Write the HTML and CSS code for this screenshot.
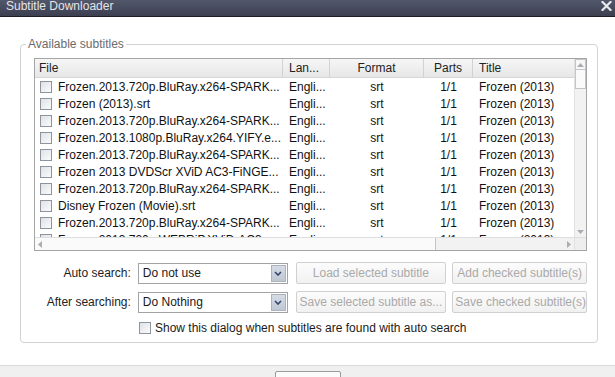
FILE: index.html
```html
<!DOCTYPE html>
<html lang="en">
<head>
  <meta charset="UTF-8">
  <title>Subtitle Downloader</title>
  <link rel="stylesheet" href="styles.css">
</head>
<body>
  <div class="window">
    <!-- Title bar -->
    <div class="titlebar">
      <span class="title">Subtitle Downloader</span>
      <svg class="close" width="11" height="10" viewBox="0 0 11 10">
        <path d="M1.5 1 L9.5 9 M9.5 1 L1.5 9" stroke="#e8e9ee" stroke-width="2.2" stroke-linecap="square"/>
      </svg>
    </div>

    <div class="group">
      <span class="legend">Available subtitles</span>

      <div class="list">
        <div class="viewport">
          <div class="row head">
            <span class="col col-file">File</span>
            <span class="col col-lang">Lan...</span>
            <span class="col col-format">Format</span>
            <span class="col col-parts">Parts</span>
            <span class="col col-title">Title</span>
          </div>
          <div class="row">
            <span class="col col-file"><span class="check"></span>Frozen.2013.720p.BluRay.x264-SPARK...</span>
            <span class="col col-lang">Engli...</span><span class="col col-format">srt</span><span class="col col-parts">1/1</span><span class="col col-title">Frozen (2013)</span>
          </div>
          <div class="row">
            <span class="col col-file"><span class="check"></span>Frozen (2013).srt</span>
            <span class="col col-lang">Engli...</span><span class="col col-format">srt</span><span class="col col-parts">1/1</span><span class="col col-title">Frozen (2013)</span>
          </div>
          <div class="row">
            <span class="col col-file"><span class="check"></span>Frozen.2013.720p.BluRay.x264-SPARK...</span>
            <span class="col col-lang">Engli...</span><span class="col col-format">srt</span><span class="col col-parts">1/1</span><span class="col col-title">Frozen (2013)</span>
          </div>
          <div class="row">
            <span class="col col-file"><span class="check"></span>Frozen.2013.1080p.BluRay.x264.YIFY.e...</span>
            <span class="col col-lang">Engli...</span><span class="col col-format">srt</span><span class="col col-parts">1/1</span><span class="col col-title">Frozen (2013)</span>
          </div>
          <div class="row">
            <span class="col col-file"><span class="check"></span>Frozen.2013.720p.BluRay.x264-SPARK...</span>
            <span class="col col-lang">Engli...</span><span class="col col-format">srt</span><span class="col col-parts">1/1</span><span class="col col-title">Frozen (2013)</span>
          </div>
          <div class="row">
            <span class="col col-file"><span class="check"></span>Frozen 2013 DVDScr XViD AC3-FiNGE...</span>
            <span class="col col-lang">Engli...</span><span class="col col-format">srt</span><span class="col col-parts">1/1</span><span class="col col-title">Frozen (2013)</span>
          </div>
          <div class="row">
            <span class="col col-file"><span class="check"></span>Frozen.2013.720p.BluRay.x264-SPARK...</span>
            <span class="col col-lang">Engli...</span><span class="col col-format">srt</span><span class="col col-parts">1/1</span><span class="col col-title">Frozen (2013)</span>
          </div>
          <div class="row">
            <span class="col col-file"><span class="check"></span>Disney Frozen (Movie).srt</span>
            <span class="col col-lang">Engli...</span><span class="col col-format">srt</span><span class="col col-parts">1/1</span><span class="col col-title">Frozen (2013)</span>
          </div>
          <div class="row">
            <span class="col col-file"><span class="check"></span>Frozen.2013.720p.BluRay.x264-SPARK...</span>
            <span class="col col-lang">Engli...</span><span class="col col-format">srt</span><span class="col col-parts">1/1</span><span class="col col-title">Frozen (2013)</span>
          </div>
          <div class="row">
            <span class="col col-file"><span class="check"></span>Frozen.2013.720p.WEBRiP.XViD-AC3...</span>
            <span class="col col-lang">Engli...</span><span class="col col-format">srt</span><span class="col col-parts">1/1</span><span class="col col-title">Frozen (2013)</span>
          </div>
        </div>

        <div class="vscroll">
          <span class="sb-btn"><svg width="7" height="4" viewBox="0 0 7 4"><path d="M0 4 L3.5 0 L7 4 Z" fill="#a9adb3"/></svg></span>
          <span class="vthumb"></span>
          <span class="sb-fill"></span>
          <span class="sb-btn"><svg width="7" height="4" viewBox="0 0 7 4"><path d="M0 0 L3.5 4 L7 0 Z" fill="#a9adb3"/></svg></span>
        </div>

        <div class="hscroll">
          <span class="hthumb"><svg width="4" height="7" viewBox="0 0 4 7"><path d="M4 0 L0 3.5 L4 7 Z" fill="#a9adb3"/></svg></span>
          <span class="sb-fill"></span>
          <span class="sb-btn"><svg width="4" height="7" viewBox="0 0 4 7"><path d="M0 0 L4 3.5 L0 7 Z" fill="#a9adb3"/></svg></span>
        </div>
        <div class="corner"></div>
      </div>

      <div class="controls">
        <div class="ctl-row">
          <span class="ctl-label">Auto search:</span>
          <div class="combo">
            <span class="combo-text">Do not use</span>
            <span class="combo-btn"><svg width="8" height="5" viewBox="0 0 8 5"><path d="M1 1 L4 4 L7 1" fill="none" stroke="#34446a" stroke-width="1.6"/></svg></span>
          </div>
          <button class="btn btn-wide" disabled>Load selected subtitle</button>
          <button class="btn btn-narrow" disabled>Add checked subtitle(s)</button>
        </div>
        <div class="ctl-row">
          <span class="ctl-label">After searching:</span>
          <div class="combo">
            <span class="combo-text">Do Nothing</span>
            <span class="combo-btn"><svg width="8" height="5" viewBox="0 0 8 5"><path d="M1 1 L4 4 L7 1" fill="none" stroke="#34446a" stroke-width="1.6"/></svg></span>
          </div>
          <button class="btn btn-wide" disabled>Save selected subtitle as...</button>
          <button class="btn btn-narrow" disabled>Save checked subtitle(s)</button>
        </div>
        <div class="check-row">
          <span class="check"></span>
          <span>Show this dialog when subtitles are found with auto search</span>
        </div>
      </div>
    </div>

    <!-- Footer strip with buttons -->
    <div class="footer">
      <button class="footer-btn"></button>
    </div>
  </div>
</body>
</html>
```

FILE: styles.css
```css
* {
  margin: 0;
  padding: 0;
  box-sizing: border-box;
}

body {
  font-family: "Liberation Sans", Arial, sans-serif;
  font-size: 12px;
  color: #1a1a1a;
  background: #ffffff;
  overflow: hidden;
}

.window {
  width: 615px;
  height: 377px;
  display: flex;
  flex-direction: column;
  background: #ffffff;
  overflow: hidden;
}

.titlebar {
  flex: none;
  height: 17px;
  padding: 0 3px 0 6px;
  background: linear-gradient(#53576b, #3c3f50);
  border-bottom: 1px solid #1d1e25;
  display: flex;
  justify-content: space-between;
  align-items: flex-start;
}

.title {
  color: #e4e5ea;
  font-size: 12px;
  line-height: 12px;
}

.close {
  margin-top: 1px;
}

.group {
  flex: none;
  position: relative;
  margin: 27px 0 0 20px;
  width: 578px;
  border: 1px solid #d2d2d2;
  border-radius: 4px;
  padding: 13px 10px 8px 13px;
}

.legend {
  position: absolute;
  top: -8px;
  left: 5px;
  padding: 0 2px;
  line-height: 14px;
  background: #ffffff;
  color: #6b6b6b;
}

/* Subtitle list */
.list {
  width: 553px;
  height: 193px;
  border: 1px solid #a5a5a5;
  display: grid;
  grid-template-columns: 1fr 12px;
  grid-template-rows: 1fr 13px;
}

.viewport {
  overflow: hidden;
}

.row {
  display: flex;
  height: 17px;
  line-height: 18px;
  white-space: nowrap;
  color: #111111;
}

.row.head {
  height: 19px;
  line-height: 18px;
  background: linear-gradient(#f6f6f6, #e7e7e7);
  border-bottom: 1px solid #d6d6d6;
  color: #222222;
}

.col {
  flex: none;
  overflow: hidden;
}

.head .col {
  border-right: 1px solid #d2d2d2;
}

.col-file {
  width: 248px;
  padding-left: 5px;
  display: flex;
  align-items: center;
}

.head .col-file {
  padding-left: 4px;
}

.col-lang {
  width: 47px;
  padding-left: 6px;
}

.col-format {
  width: 94px;
  text-align: center;
}

.col-parts {
  width: 49px;
  text-align: center;
}

.col-title {
  width: 110px;
  padding-left: 6px;
}

.head .col-title {
  border-right: none;
}

.check {
  flex: none;
  display: inline-block;
  width: 12px;
  height: 12px;
  margin-right: 6px;
  border: 1px solid #8e949c;
  background: linear-gradient(135deg, #dfe2e6, #fbfbfc);
}

.vscroll {
  display: flex;
  flex-direction: column;
  background: #f2f2f2;
  border-left: 1px solid #e2e2e2;
}

.hscroll {
  display: flex;
  background: #f2f2f2;
  border-top: 1px solid #dedede;
}

.sb-btn {
  flex: none;
  width: 11px;
  height: 11px;
  display: flex;
  align-items: center;
  justify-content: center;
}

.vscroll .sb-btn:first-child {
  border: 1px solid #c4c4c4;
  background: #f7f7f7;
}

.vthumb {
  flex: none;
  height: 19px;
  border: 1px solid #c4c4c4;
  border-top: none;
  background: #fafafa;
}

.sb-fill {
  flex: 1;
}

.hthumb {
  flex: none;
  width: 401px;
  height: 12px;
  border-right: 1px solid #c4c4c4;
  background: #fafafa;
  display: flex;
  align-items: center;
  padding-left: 3px;
}

.hscroll .sb-btn {
  height: 12px;
}

.corner {
  background: #eeeeee;
  border-top: 1px solid #dedede;
  border-left: 1px solid #e2e2e2;
}

/* Controls below the list */
.controls {
  margin-top: 11px;
  display: flex;
  flex-direction: column;
  gap: 7px;
}

.ctl-row {
  display: flex;
  align-items: center;
  height: 22px;
}

.ctl-label {
  width: 97px;
  text-align: right;
  color: #222222;
  margin-right: 7px;
}

.combo {
  width: 150px;
  height: 21px;
  border: 1px solid #a3a3a3;
  background: #ffffff;
  display: flex;
  align-items: center;
  justify-content: space-between;
  padding: 1px;
  margin-right: 8px;
}

.combo-text {
  padding-left: 3px;
}

.combo-btn {
  width: 15px;
  height: 17px;
  background: linear-gradient(#d6dce6, #bfc7d3);
  border: 1px solid #aab2bf;
  display: flex;
  align-items: center;
  justify-content: center;
}

.btn {
  height: 22px;
  font-family: inherit;
  font-size: 12px;
  color: #a9a9a9;
  background: linear-gradient(#fcfcfc, #f1f1f1);
  border: 1px solid #d0d0d0;
  border-radius: 2px;
  white-space: nowrap;
  overflow: hidden;
  padding: 0 2px;
}

.btn-wide {
  width: 151px;
  margin-right: 6px;
}

.btn-narrow {
  width: 135px;
}

.check-row {
  margin-top: 2px;
  padding-left: 105px;
  display: flex;
  align-items: center;
  height: 12px;
  color: #1a1a1a;
}

.check-row .check {
  margin-right: 4px;
}

.footer {
  flex: 1;
  min-height: 0;
  margin-top: 22px;
  background: #f0f0f0;
  border-top: 1px solid #dadada;
  padding: 5px 0 0 275px;
  overflow: hidden;
}

.footer-btn {
  display: block;
  width: 66px;
  height: 20px;
  border: 1px solid #9a9a9a;
  border-radius: 2px;
  background: #fbfbfb;
}
```
